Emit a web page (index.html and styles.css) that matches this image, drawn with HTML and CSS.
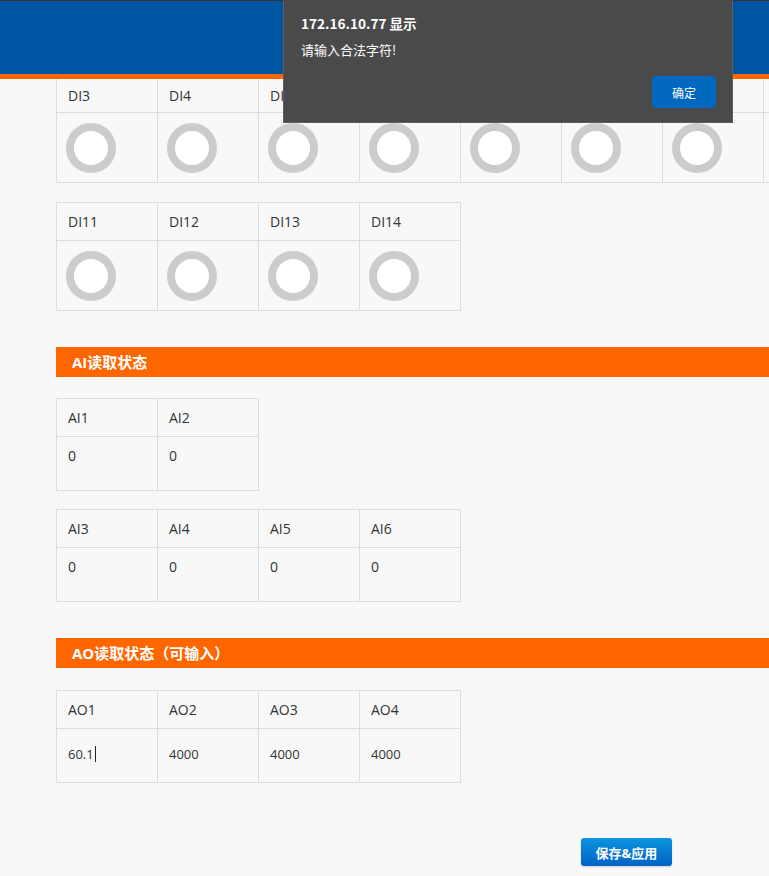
FILE: index.html
```html
<!DOCTYPE html>
<html lang="zh-CN">
<head>
<meta charset="utf-8">
<title>IO状态</title>
<link rel="stylesheet" href="styles.css">
</head>
<body>
<header class="topbar"></header>

<main class="content">
  <div class="grid cols-8 first">
    <div class="cell head short">DI3</div>
    <div class="cell head short">DI4</div>
    <div class="cell head short">DI5</div>
    <div class="cell head short">DI6</div>
    <div class="cell head short">DI7</div>
    <div class="cell head short">DI8</div>
    <div class="cell head short">DI9</div>
    <div class="cell head short">DI10</div>
    <div class="cell led"><span class="ring"></span></div>
    <div class="cell led"><span class="ring"></span></div>
    <div class="cell led"><span class="ring"></span></div>
    <div class="cell led"><span class="ring"></span></div>
    <div class="cell led"><span class="ring"></span></div>
    <div class="cell led"><span class="ring"></span></div>
    <div class="cell led"><span class="ring"></span></div>
    <div class="cell led"><span class="ring"></span></div>
  </div>

  <div class="grid cols-4 gap-top">
    <div class="cell head">DI11</div>
    <div class="cell head">DI12</div>
    <div class="cell head">DI13</div>
    <div class="cell head">DI14</div>
    <div class="cell led"><span class="ring"></span></div>
    <div class="cell led"><span class="ring"></span></div>
    <div class="cell led"><span class="ring"></span></div>
    <div class="cell led"><span class="ring"></span></div>
  </div>

  <h2 class="section">AI读取状态</h2>

  <div class="grid cols-2 after-section">
    <div class="cell head">AI1</div>
    <div class="cell head">AI2</div>
    <div class="cell val">0</div>
    <div class="cell val">0</div>
  </div>

  <div class="grid cols-4 gap-top-ai">
    <div class="cell head">AI3</div>
    <div class="cell head">AI4</div>
    <div class="cell head">AI5</div>
    <div class="cell head">AI6</div>
    <div class="cell val">0</div>
    <div class="cell val">0</div>
    <div class="cell val">0</div>
    <div class="cell val">0</div>
  </div>

  <h2 class="section">AO读取状态（可输入）</h2>

  <div class="grid cols-4 after-section-ao">
    <div class="cell head">AO1</div>
    <div class="cell head">AO2</div>
    <div class="cell head">AO3</div>
    <div class="cell head">AO4</div>
    <div class="cell val input"><span>60.1</span><span class="caret"></span></div>
    <div class="cell val input"><span>4000</span></div>
    <div class="cell val input"><span>4000</span></div>
    <div class="cell val input"><span>4000</span></div>
  </div>

  <div class="actions">
    <button class="save" type="button">保存&amp;应用</button>
  </div>
</main>

<div class="dialog">
  <div class="dialog-title">172.16.10.77 显示</div>
  <div class="dialog-msg">请输入合法字符!</div>
  <div class="dialog-foot">
    <button class="ok" type="button">确定</button>
  </div>
</div>
</body>
</html>
```

FILE: styles.css
```css
html, body {
  margin: 0;
  padding: 0;
  overflow: hidden;
}

body {
  background: #f8f8f8;
  font-family: "Open Sans", "Noto Sans CJK SC", sans-serif;
  font-size: 14px;
  color: #333;
  width: 769px;
  height: 876px;
  position: relative;
}

.topbar {
  height: 73px;
  background: #0055a2;
  border-top: 1px solid #333;
  border-bottom: 5px solid #ff6600;
}

.content {
  padding-left: 56px;
}

.grid {
  display: grid;
  border-left: 1px solid #dcdcdc;
  border-top: 1px solid #dcdcdc;
  width: max-content;
}

.grid.first {
  border-top: none;
}

.cols-8 { grid-template-columns: repeat(8, 101px); }
.cols-4 { grid-template-columns: repeat(4, 101px); }
.cols-2 { grid-template-columns: repeat(2, 101px); }

.gap-top { margin-top: 19px; }
.gap-top-ai { margin-top: 18px; }
.after-section { margin-top: 21px; }
.after-section-ao { margin-top: 22px; }

.cell {
  box-sizing: border-box;
  border-right: 1px solid #dcdcdc;
  border-bottom: 1px solid #dcdcdc;
  padding: 9px 11px;
  line-height: 20px;
}

.cell.head {
  height: 38px;
}

.cell.head.short {
  height: 34px;
  padding-top: 7px;
}

.cell.led {
  height: 70px;
  padding: 10px 9px;
}

.ring {
  display: block;
  box-sizing: border-box;
  width: 50px;
  height: 50px;
  border-radius: 50%;
  border: 8px solid #cccccc;
  background: #ffffff;
}

.cell.val {
  height: 54px;
}

.cell.val.input {
  padding-top: 15px;
  font-size: 13px;
  display: flex;
  align-items: flex-start;
}

.caret {
  display: inline-block;
  width: 1px;
  height: 16px;
  margin-top: 2px;
  margin-left: 1px;
  background: #222;
}

.section {
  margin: 36px 0 0 0;
  height: 30px;
  line-height: 30px;
  background: #ff6600;
  color: #fff;
  font-size: 15px;
  font-weight: bold;
  padding-left: 16px;
}

.actions {
  margin-top: 55px;
  padding-left: 525px;
}

.save {
  width: 91px;
  height: 28px;
  border: none;
  border-radius: 3px;
  background: linear-gradient(#0b95dd, #0062c6);
  color: #fff;
  font-family: "Open Sans", "Noto Sans CJK SC", sans-serif;
  font-size: 13px;
  font-weight: bold;
  padding: 0;
  box-shadow: 0 1px 2px rgba(0, 0, 0, 0.15);
}

.dialog {
  position: absolute;
  top: 0;
  left: 283px;
  width: 448px;
  height: 122px;
  background: #4a4a4a;
  border: 1px solid #5e5e5e;
  border-top: none;
  color: #fff;
  box-sizing: content-box;
}

.dialog-title {
  font-family: "Noto Sans CJK SC", sans-serif;
  font-weight: bold;
  font-size: 13.6px;
  padding: 13px 0 0 17px;
  line-height: 20px;
}

.dialog-msg {
  font-family: "Noto Sans CJK SC", sans-serif;
  font-size: 13px;
  padding: 8px 0 0 17px;
  line-height: 18px;
}

.dialog-foot {
  display: flex;
  justify-content: flex-end;
  padding: 17px 16px 0 0;
}

.ok {
  width: 64px;
  height: 32px;
  border: none;
  border-radius: 4px;
  background: #0068bf;
  color: #fff;
  font-family: "Noto Sans CJK SC", sans-serif;
  font-size: 12px;
  padding: 0;
}
```
